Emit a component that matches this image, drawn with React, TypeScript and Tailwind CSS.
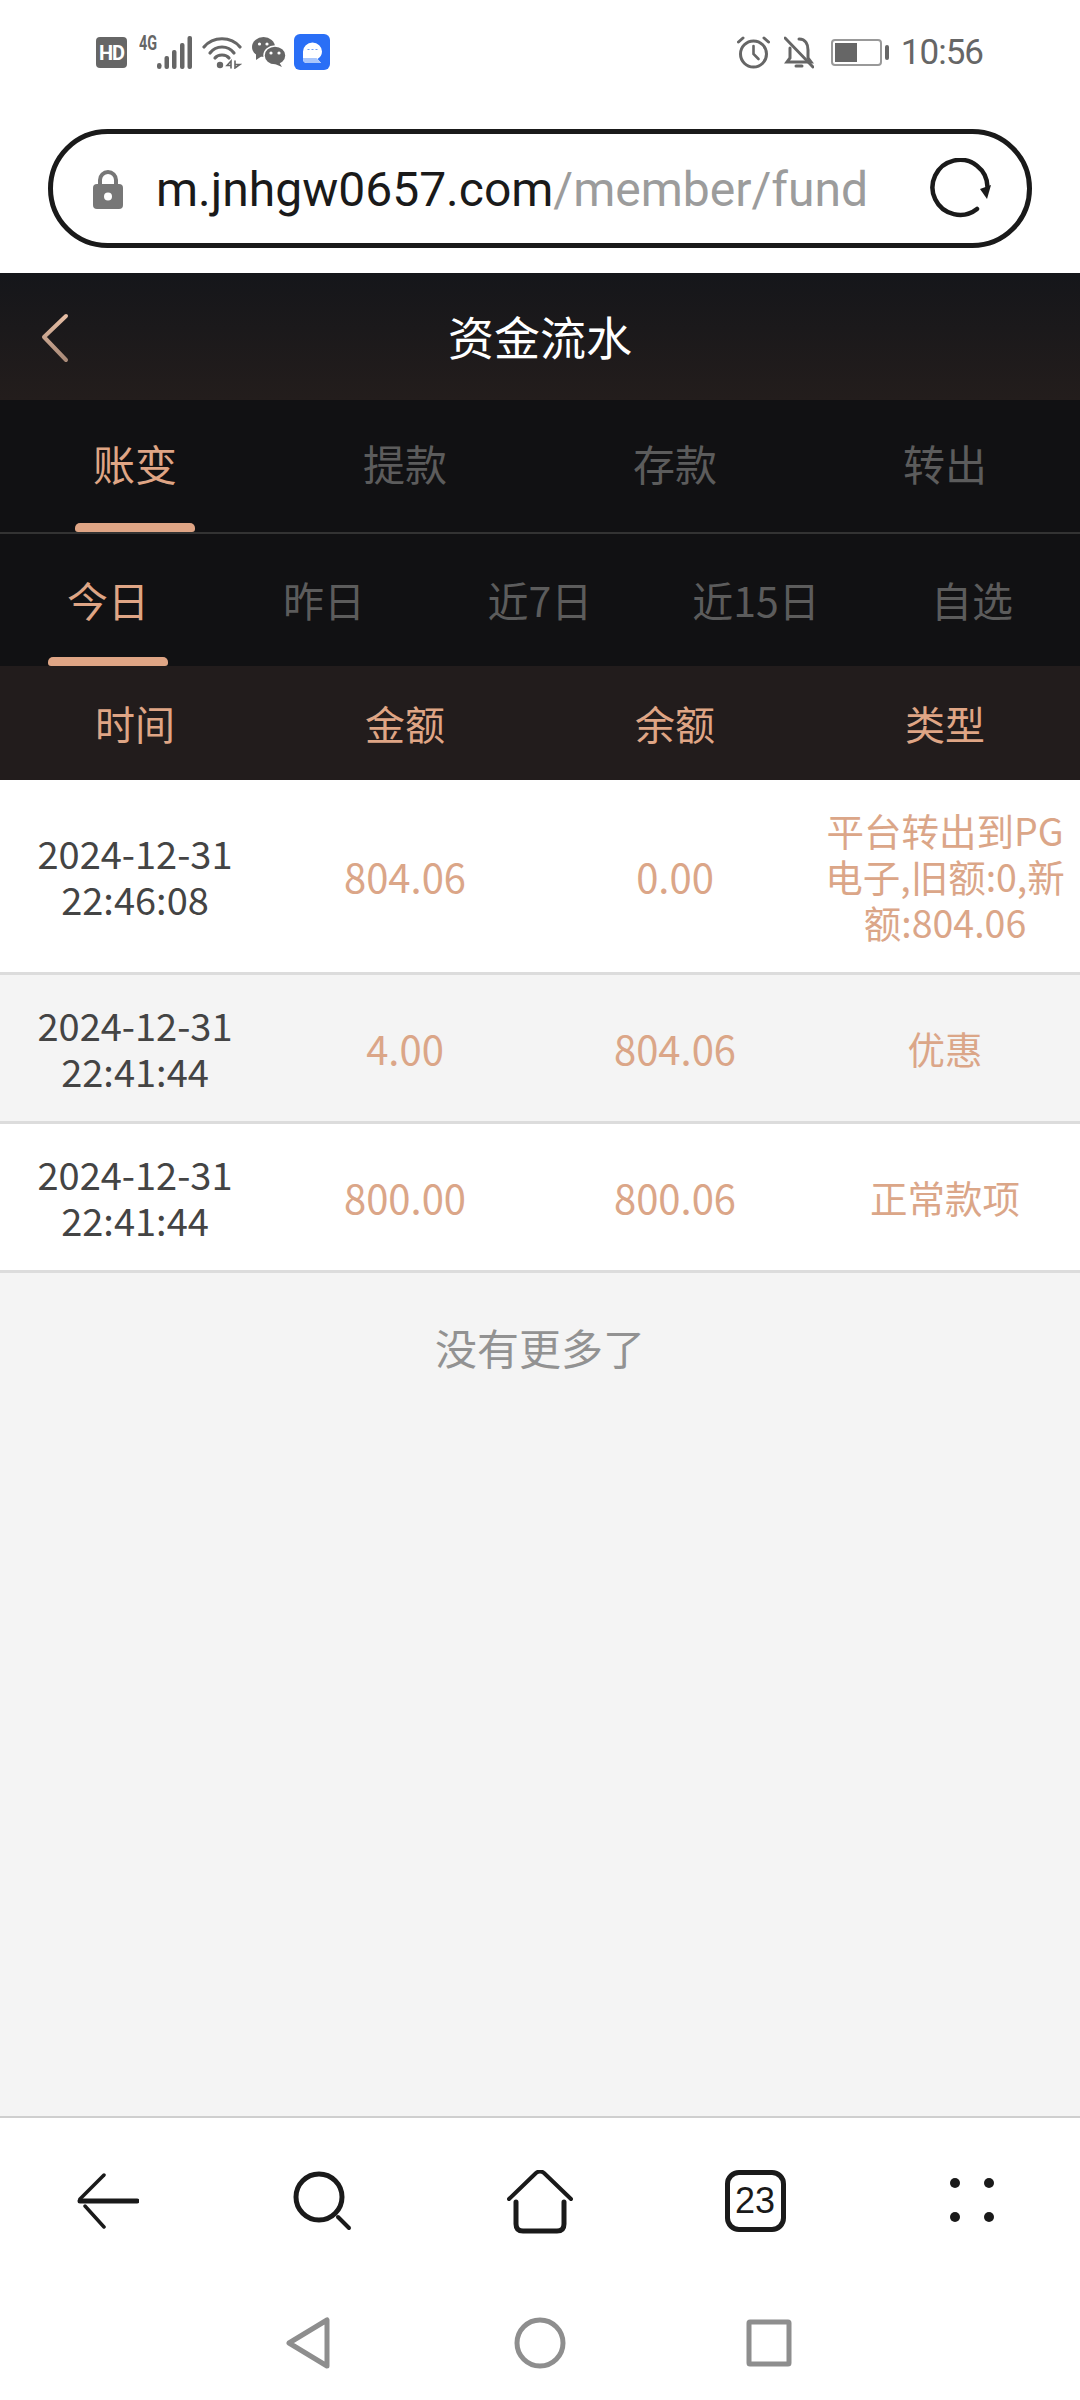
const cjk = "font-['Noto_Sans_CJK_SC','Noto_Sans',sans-serif]";

const tabs = ["账变", "提款", "存款", "转出"];
const ranges = ["今日", "昨日", "近7日", "近15日", "自选"];
const heads = ["时间", "金额", "余额", "类型"];

const rows = [
  { date: "2024-12-31", time: "22:46:08", amount: "804.06", balance: "0.00", type: "平台转出到PG电子,旧额:0,新额:804.06", bg: "bg-white" },
  { date: "2024-12-31", time: "22:41:44", amount: "4.00", balance: "804.06", type: "优惠", bg: "bg-[#f4f4f4]" },
  { date: "2024-12-31", time: "22:41:44", amount: "800.00", balance: "800.06", type: "正常款项", bg: "bg-white" },
];

function StatusLeft() {
  return (
    <div className="flex items-center gap-[10px]">
      {/* HD */}
      <div className="w-[31px] h-[31px] mt-[1px] rounded-[4px] bg-[#666] flex items-center justify-center text-white text-[20px] leading-none font-bold font-['Roboto',sans-serif] tracking-[-1px]">
        HD
      </div>
      {/* 4G + signal */}
      <div className="relative w-[53px] h-[36px] ml-[2px]">
        <span className="absolute left-0 top-[-1px] origin-left scale-x-[0.72] text-[#666] text-[20px] leading-[20px] font-bold font-['Roboto',sans-serif]">4G</span>
        <svg className="absolute left-0 top-0" width="53" height="36" viewBox="0 0 53 36" fill="#666">
          <rect x="18" y="29" width="4.500" height="6" rx="2.200" />
          <rect x="25.500" y="22" width="4.500" height="13" rx="2" />
          <rect x="33" y="16" width="4.500" height="19" rx="2" />
          <rect x="41" y="9" width="4.500" height="26" rx="2" />
          <rect x="48.500" y="2" width="4.500" height="33" rx="2" />
        </svg>
      </div>
      {/* wifi */}
      <svg width="40" height="33" viewBox="0 0 40 33" fill="none" stroke="#666" strokeWidth="3.200" strokeLinecap="round">
        <path d="M2 11 C11 0 29 0 38 11" />
        <path d="M8 17 C14 9 26 9 32 17" />
        <path d="M13 22 C16 18 24 18 27 22" />
        <circle cx="18" cy="29" r="3.200" fill="#666" stroke="none" />
        <path d="M29 32 V25 L25 29.500 H29 M33 25 V32 L38 28.500 H33" strokeWidth="1.600" />
      </svg>
      {/* wechat */}
      <svg width="34" height="30" viewBox="0 0 34 30">
        <ellipse cx="11.500" cy="10" rx="11.500" ry="10" fill="#666" />
        <path d="M4 16 L4 23 L10 19 Z" fill="#666" />
        <ellipse cx="23" cy="18.500" rx="11" ry="9.500" fill="#666" stroke="#fff" strokeWidth="1.500" />
        <path d="M27 25 L30 30 L23 27 Z" fill="#666" />
        <circle cx="7.500" cy="7" r="1.600" fill="#fff" />
        <circle cx="15" cy="7" r="1.600" fill="#fff" />
        <circle cx="19" cy="16" r="1.600" fill="#fff" />
        <circle cx="27" cy="16" r="1.600" fill="#fff" />
      </svg>
      {/* blue message app */}
      <svg width="36" height="36" viewBox="0 0 36 36" className="-ml-[2px]">
        <rect width="36" height="36" rx="6" fill="#2a6ff6" />
        <path d="M9 17.500 A9.500 9 0 0 1 28 17.500 A9.500 9 0 0 1 23.500 25 L27 29 H13 Q9 29 9 25 Z" fill="#fff" />
        <path d="M9 24 H22.500 L27 29 H13 Q9 29 9 25 Z" fill="#a9c6fb" />
        <path d="M13.500 15.500 H15.500 M17.500 15.500 H19.500 M21.500 15.500 H23.500" stroke="#6f9ff5" strokeWidth="1.200" />
      </svg>
    </div>
  );
}

function StatusRight() {
  return (
    <div className="flex items-center">
      <svg width="33" height="33" viewBox="0 0 33 33" fill="none" stroke="#666" strokeWidth="3" strokeLinecap="round">
        <circle cx="16.500" cy="18" r="13" />
        <path d="M16.500 10 V18 L21.500 23" strokeWidth="2.600" />
        <path d="M1.500 6 L6 2 M27 2 L31.500 6" />
      </svg>
      <svg className="ml-[14px]" width="30" height="33" viewBox="0 0 30 33" fill="none" stroke="#666" strokeWidth="3" strokeLinecap="round">
        <path d="M15 3 C22 3 24 9 24 14 V22 L27 26 H3 L6 22 V12" />
        <path d="M12 30 H18" />
        <path d="M1 2 L29 31" />
      </svg>
      <div className="ml-[17px] flex items-center">
        <div className="w-[51px] h-[27px] border-2 border-[#999] rounded-[4px] p-[2px]">
          <div className="w-[22px] h-full bg-[#666]" />
        </div>
        <div className="ml-[3px] w-[4px] h-[15px] rounded-[2px] bg-[#666]" />
      </div>
      <span className="ml-[12px] mt-[1px] text-[35px] leading-[36px] tracking-[-1px] text-[#666] font-['Roboto',sans-serif]">10:56</span>
    </div>
  );
}

function UrlBar() {
  return (
    <div className="mx-[48px] mt-[59px] h-[119px] rounded-[60px] border-[5px] border-[#1a1a1a] flex items-center pl-[40px] pr-[35px]">
      <svg width="30" height="40" viewBox="0 0 30 40">
        <path d="M7 17 V11 A8 8 0 0 1 23 11 V17" fill="none" stroke="#777" strokeWidth="4" />
        <rect y="15" width="30" height="25" rx="4" fill="#777" />
        <circle cx="15" cy="27.500" r="4" fill="#fff" />
      </svg>
      <div className="ml-[33px] mt-[2px] flex-1 text-[48px] leading-[60px] font-['Roboto',sans-serif] whitespace-nowrap">
        <span className="text-[#1a1a1a]">m.jnhgw0657.com</span>
        <span className="text-[#9c9c9c]">/member/fund</span>
      </div>
      <svg width="62" height="62" viewBox="0 0 62 62" fill="none">
        <path d="M47 51 A27.500 27.500 0 1 1 57.500 29" stroke="#1a1a1a" strokeWidth="4.500" strokeLinecap="round" />
        <path d="M50 31 L61 27 L57 41 Z" fill="#1a1a1a" />
      </svg>
    </div>
  );
}

function Header() {
  return (
    <div className="relative mt-[25px] h-[127px] bg-gradient-to-b from-[#15161a] to-[#231d1c] flex items-center justify-center">
      <svg className="absolute left-[40px] top-[40px]" width="30" height="50" viewBox="0 0 30 50" fill="none">
        <defs>
          <linearGradient id="backGrad" x1="0" y1="0" x2="0" y2="1">
            <stop offset="0" stopColor="#e6bda4" />
            <stop offset="1" stopColor="#a98a78" />
          </linearGradient>
        </defs>
        <path d="M26 3 L4 24 L26 47" stroke="url(#backGrad)" strokeWidth="4" strokeLinecap="round" strokeLinejoin="round" />
      </svg>
      <span className="text-white text-[46px] leading-[60px] -mt-[3px]">资金流水</span>
    </div>
  );
}

function TabRow({ items, active, size, extra }: { items: string[]; active: number; size: string; extra: string }) {
  return (
    <div className={`flex bg-[#111113] ${extra}`}>
      {items.map((t, i) => (
        <div key={t} className="relative flex-1 flex items-center justify-center">
          <span className={`${size} leading-[60px] ${i === active ? "text-[#dfa585]" : "text-[#5c5c5c]"}`}>{t}</span>
          {i === active && <div className="absolute bottom-0 left-1/2 -translate-x-1/2 w-[120px] h-[9px] rounded-t-[5px] rounded-b-[3px] bg-[#dfa585]" />}
        </div>
      ))}
    </div>
  );
}

function BottomBar() {
  return (
    <div className="border-t-2 border-[#cfcfcf] bg-white h-[284px]">
      <div className="grid grid-cols-5 pt-[52px] h-[168px] justify-items-center">
        <svg width="62" height="56" viewBox="0 0 62 56" fill="none" stroke="#1a1a1a" strokeLinecap="round" className="mt-[3px]">
          <path d="M3 28 H60" strokeWidth="5" />
          <path d="M3 26 L27 2" strokeWidth="3.500" />
          <path d="M8 33 L27 54" strokeWidth="3.500" />
        </svg>
        <svg width="60" height="60" viewBox="0 0 60 60" fill="none" stroke="#1a1a1a" strokeLinecap="round" className="mt-[1px] -ml-[2px]">
          <circle cx="26" cy="26" r="23" strokeWidth="5" />
          <path d="M45 46 L56 57" strokeWidth="4" />
        </svg>
        <svg width="66" height="64" viewBox="0 0 66 64" fill="none" stroke="#1a1a1a" strokeLinecap="round" strokeLinejoin="round">
          <path d="M2 29 L29 3 Q33 0 37 3 L64 29" strokeWidth="4" />
          <path d="M9 32 V54 Q9 61 16 61 H50 Q57 61 57 54 V32" strokeWidth="5" />
        </svg>
        <div className="w-[61px] h-[62px] -ml-[2px] rounded-[14px] border-[5px] border-[#1a1a1a] flex items-center justify-center text-[#1a1a1a] text-[36px] leading-none font-['Liberation_Sans',sans-serif]">
          23
        </div>
        <svg width="46" height="46" viewBox="0 0 46 46" fill="#1a1a1a" className="mt-[7px]">
          <circle cx="6" cy="6" r="5" />
          <circle cx="40" cy="6" r="5" />
          <circle cx="6" cy="40" r="5" />
          <circle cx="40" cy="40" r="5" />
        </svg>
      </div>
      <div className="flex justify-center items-center h-[60px] mt-[27px] pr-[3px]">
        <svg width="46" height="52" viewBox="0 0 46 52" fill="none" stroke="#8e8e8e" strokeWidth="5" strokeLinejoin="round">
          <path d="M42 3 V49 L4 26 Z" />
        </svg>
        <svg className="ml-[183px]" width="52" height="52" viewBox="0 0 52 52" fill="none" stroke="#8e8e8e" strokeWidth="5">
          <circle cx="26" cy="26" r="23" />
        </svg>
        <svg className="ml-[180px]" width="46" height="48" viewBox="0 0 46 48" fill="none" stroke="#8e8e8e" strokeWidth="5" strokeLinejoin="round">
          <rect x="3" y="3" width="40" height="42" rx="1" />
        </svg>
      </div>
    </div>
  );
}

export default function App() {
  return (
    <div className={`w-[1080px] h-[2400px] flex flex-col bg-white overflow-hidden ${cjk}`}>
      <div className="flex justify-between items-center h-[36px] mt-[34px] pl-[96px] pr-[97px]">
        <StatusLeft />
        <StatusRight />
      </div>
      <UrlBar />
      <Header />
      <TabRow items={tabs} active={0} size="text-[42px] -mt-[6px]" extra="border-b-2 border-[#333] h-[134px]" />
      <TabRow items={ranges} active={0} size="text-[41px] -mt-[2px]" extra="h-[132px]" />

      {/* table head */}
      <div className="grid grid-cols-4 h-[114px] items-center bg-[#221c1c]">
        {heads.map((h) => (
          <div key={h} className="text-center text-[40px] leading-[54px] text-[#dfa585]">{h}</div>
        ))}
      </div>

      <div className="flex-1 bg-[#f4f4f4] flex flex-col">
        {rows.map((r, i) => (
          <div key={i} className={`grid grid-cols-4 items-center py-[27px] border-b-[3px] border-[#dcdcdc] ${r.bg}`}>
            <div className="text-center text-[38px] leading-[46px] text-[#444]">
              <div>{r.date}</div>
              <div>{r.time}</div>
            </div>
            <div className="text-center text-[40px] leading-[46px] text-[#dba688]">{r.amount}</div>
            <div className="text-center text-[40px] leading-[46px] text-[#dba688]">{r.balance}</div>
            <div className="text-center text-[37.500px] leading-[46px] text-[#dba688] px-[10px] break-all">{r.type}</div>
          </div>
        ))}
        <div className="text-center text-[42px] leading-[60px] text-[#929292] mt-[44px]">没有更多了</div>
      </div>

      <BottomBar />
    </div>
  );
}
